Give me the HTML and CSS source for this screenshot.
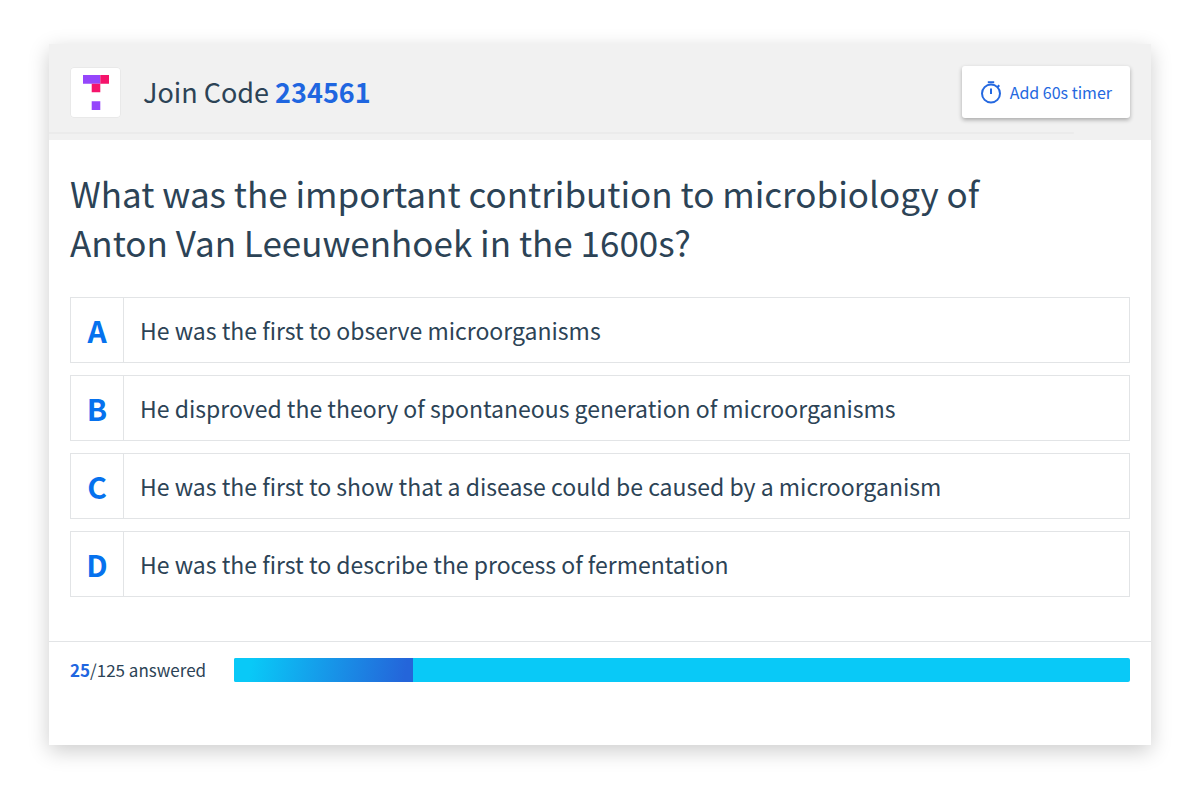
FILE: index.html
```html
<!DOCTYPE html>
<html lang="en">
<head>
  <meta charset="UTF-8" />
  <meta name="viewport" content="width=device-width, initial-scale=1" />
  <title>Join Code 234561</title>
  <link rel="stylesheet" href="styles.css">
</head>
<body>

  <main class="card">
    <header class="card-header">
      <svg class="logo" viewBox="0 0 51 51" role="img" aria-label="Logo">
        <path fill="#9546fb" d="M13 8h17.300v8.700H13zM21.700 34.200h8.600v8.700h-8.600z" />
        <path fill="#f5146b" d="M30.300 8H39v8.700h-8.700v8.600h-8.600v-8.600h8.600z" />
      </svg>
      <p class="join-code">Join Code <strong>234561</strong></p>
      <button type="button" class="timer-btn">
        <svg class="timer-icon" viewBox="0 0 24 24" aria-hidden="true">
          <circle cx="12" cy="13.500" r="9" />
          <path d="M8.800 2.300h6.400M12 8.500v5.500M18.300 7.200l2-2" />
        </svg>
        Add 60s timer
      </button>
    </header>

    <section class="question">
      <h1>What was the important contribution to microbiology of Anton Van Leeuwenhoek in the 1600s?</h1>

      <ol class="answers">
        <li><span class="letter">A</span><span class="answer">He was the first to observe microorganisms</span></li>
        <li><span class="letter">B</span><span class="answer">He disproved the theory of spontaneous generation of microorganisms</span></li>
        <li><span class="letter">C</span><span class="answer">He was the first to show that a disease could be caused by a microorganism</span></li>
        <li><span class="letter">D</span><span class="answer">He was the first to describe the process of fermentation</span></li>
      </ol>
    </section>

    <footer class="card-footer">
      <p class="answered"><strong>25</strong>/125 answered</p>
      <div class="progress" role="progressbar" aria-label="Answered" aria-valuenow="25" aria-valuemin="0" aria-valuemax="125">
        <div class="progress-fill" style="width: 20%"></div>
      </div>
    </footer>
  </main>

</body>
</html>
```

FILE: styles.css
```css
* {
  box-sizing: border-box;
}

body {
  font-family: "Noto Sans CJK SC", "Noto Sans", sans-serif;
  background: #fff;
  color: #2c4356;
  margin: 0;
  padding: 44px 49px;
}

h1, p, ol {
  margin: 0;
  padding: 0;
}

.card {
  background: #fff;
  box-shadow: 0 6px 20px rgba(0, 0, 0, 0.2);
}

.card-header {
  display: flex;
  align-items: center;
  padding: 22px 21px;
  background: #f1f1f1 linear-gradient(#ebebeb, #ebebeb) no-repeat left bottom 6px / 93% 2px;
}

.logo {
  width: 51px;
  height: 51px;
  background: #fff;
  border-radius: 4px;
  box-shadow: inset 0 0 0 1px #e9e9e9;
}

.join-code {
  flex: 1;
  margin-left: 22px;
  font-size: 27px;
  line-height: 40px;
}

strong {
  color: #1f66e0;
}

.timer-btn {
  display: flex;
  align-items: center;
  gap: 7px;
  height: 52px;
  padding: 0 18px 0 17px;
  border: none;
  border-radius: 3px;
  background: #fff;
  box-shadow: 0 2px 4px rgba(0, 0, 0, 0.3);
  color: #2468e0;
  font-family: inherit;
  font-size: 16px;
  cursor: pointer;
}

.timer-icon {
  width: 24px;
  height: 24px;
  fill: none;
  stroke: currentColor;
  stroke-width: 2;
}

.question {
  padding: 28px 21px 44px;
}

h1 {
  max-width: 960px;
  font-size: 35px;
  font-weight: normal;
  line-height: 49px;
}

.answers {
  display: flex;
  flex-direction: column;
  gap: 12px;
  margin-top: 31px;
  list-style: none;
}

.answers li {
  display: flex;
  min-height: 66px;
  border: 1px solid #e2e4e6;
}

.letter {
  display: flex;
  align-items: center;
  justify-content: center;
  width: 53px;
  border-right: 1px solid #e2e4e6;
  color: #0672ee;
  font-size: 30px;
  font-weight: bold;
  line-height: 40px;
}

.answer {
  flex: 1;
  align-self: center;
  padding: 0 16px;
  font-size: 23px;
  line-height: 32px;
}

.card-footer {
  display: flex;
  align-items: center;
  gap: 28px;
  padding: 16px 21px 63px;
  border-top: 1px solid #e2e4e6;
}

.answered {
  font-size: 17px;
  line-height: 24px;
}

.progress {
  flex: 1;
  height: 24px;
  border-radius: 2px;
  background: #09c9f7;
  overflow: hidden;
}

.progress-fill {
  height: 100%;
  background: linear-gradient(100deg, #09c9f7 10%, #2465da 95%);
}
```
